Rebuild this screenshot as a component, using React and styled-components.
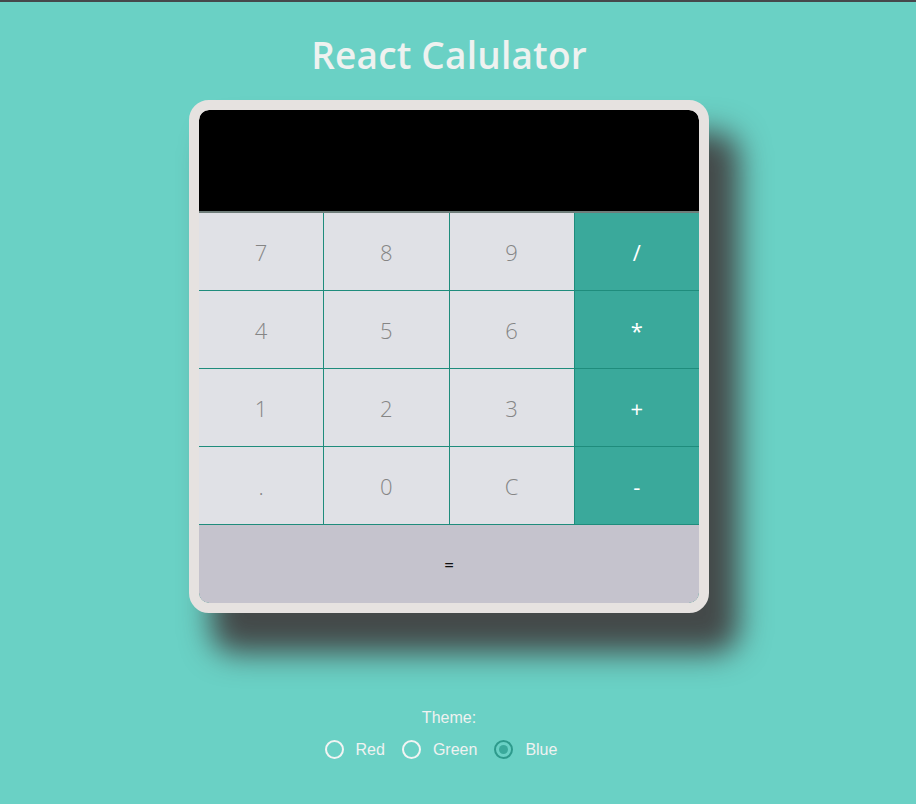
import React, { useState } from 'react';
import styled, { createGlobalStyle } from 'styled-components';

const GlobalStyle = createGlobalStyle`
  html, body {
    margin: 0;
    padding: 0;
    background: #6ad1c5;
  }
  body {
    border-top: 2px solid #46494c;
    min-height: 802px;
    font-family: "Liberation Sans", Arial, sans-serif;
  }
`;

// the original page had a scrollbar gutter on the right
const Page = styled.div`
  display: flex;
  flex-direction: column;
  align-items: center;
  padding-right: 18px;
`;

const Title = styled.h1`
  margin: 31px 0 23px;
  font-family: "Open Sans", "Noto Sans", sans-serif;
  font-weight: 600;
  font-size: 37px;
  line-height: 44px;
  color: #eef2f0;
  letter-spacing: 0.2px;
`;

const Calculator = styled.div`
  width: 500px;
  border: 10px solid #e6e2e0;
  border-radius: 20px;
  background: #e6e2e0;
  box-shadow: 26px 36px 30px 4px #444949;
  overflow: hidden;
`;

const Display = styled.div`
  height: 101px;
  background: #000;
  border-radius: 10px 10px 0 0;
  border-bottom: 2px solid #6f7d7a;
  color: #fff;
  font-family: "Open Sans", sans-serif;
  font-size: 40px;
  display: flex;
  align-items: center;
  justify-content: flex-end;
  padding: 0 20px;
`;

const Keypad = styled.div`
  display: grid;
  grid-template-columns: repeat(4, 1fr);
  grid-template-rows: repeat(4, 77px) 78px;
  gap: 1px;
  background: #1f8c7c;
  border-radius: 0 0 10px 10px;
  overflow: hidden;
`;

const Key = styled.button`
  border: none;
  margin: 0;
  padding: 0;
  cursor: pointer;
  display: flex;
  align-items: center;
  justify-content: center;
  font-family: "Open Sans", "Noto Sans", sans-serif;
  font-weight: ${(p) => (p.$op ? 400 : 300)};
  font-size: 22px;
  background: ${(p) => (p.$op ? '#3aa99b' : '#e0e1e6')};
  color: ${(p) => (p.$op ? '#ffffff' : '#858585')};
`;

const EqualsKey = styled(Key)`
  grid-column: 1 / -1;
  background: #c5c3cd;
  color: #111;
  font-size: 17px;
  font-weight: 400;
`;

const ThemeBox = styled.div`
  margin-top: 96px;
  display: flex;
  flex-direction: column;
  align-items: center;
  gap: 13px;
  color: #f0f2f1;
  font-size: 16px;
  line-height: 18px;
`;

// labels carry a trailing space in the original, so the row sits a bit left
const RadioRow = styled.div`
  display: flex;
  align-items: center;
  gap: 17px;
  padding-right: 16px;
`;

const RadioLabel = styled.label`
  display: flex;
  align-items: center;
  gap: 12px;
  cursor: pointer;
  font-size: 16px;
  color: #f0f2f1;
`;

const HiddenInput = styled.input`
  display: none;
`;

const Circle = styled.span`
  width: 19px;
  height: 19px;
  box-sizing: border-box;
  border-radius: 50%;
  border: 2px solid ${(p) => (p.$checked ? '#2e9a8c' : '#f2f4f3')};
  display: flex;
  align-items: center;
  justify-content: center;
  &::after {
    content: '';
    width: 9px;
    height: 9px;
    border-radius: 50%;
    background: ${(p) => (p.$checked ? '#3aa99b' : 'transparent')};
  }
`;

const rows = [
  ['7', '8', '9', '/'],
  ['4', '5', '6', '*'],
  ['1', '2', '3', '+'],
  ['.', '0', 'C', '-'],
];

const App = () => {
  const [theme, setTheme] = useState('Blue');
  const [value, setValue] = useState('');

  const press = (k) => {
    if (k === 'C') return setValue('');
    if (k === '=') {
      try {
        // eslint-disable-next-line no-new-func
        setValue(String(Function('return (' + value + ')')()));
      } catch (e) {
        setValue('');
      }
      return;
    }
    setValue(value + k);
  };

  return (
    <Page>
      <GlobalStyle />
      <Title>React Calulator</Title>
      <Calculator>
        <Display>{value}</Display>
        <Keypad>
          {rows.flat().map((k, i) => (
            <Key key={k} $op={i % 4 === 3} onClick={() => press(k)}>
              {k}
            </Key>
          ))}
          <EqualsKey onClick={() => press('=')}>=</EqualsKey>
        </Keypad>
      </Calculator>
      <ThemeBox>
        <span>Theme:</span>
        <RadioRow>
          {['Red', 'Green', 'Blue'].map((t) => (
            <RadioLabel key={t}>
              <HiddenInput
                type="radio"
                name="theme"
                checked={theme === t}
                onChange={() => setTheme(t)}
              />
              <Circle $checked={theme === t} />
              {t}
            </RadioLabel>
          ))}
        </RadioRow>
      </ThemeBox>
    </Page>
  );
};

export default App;
